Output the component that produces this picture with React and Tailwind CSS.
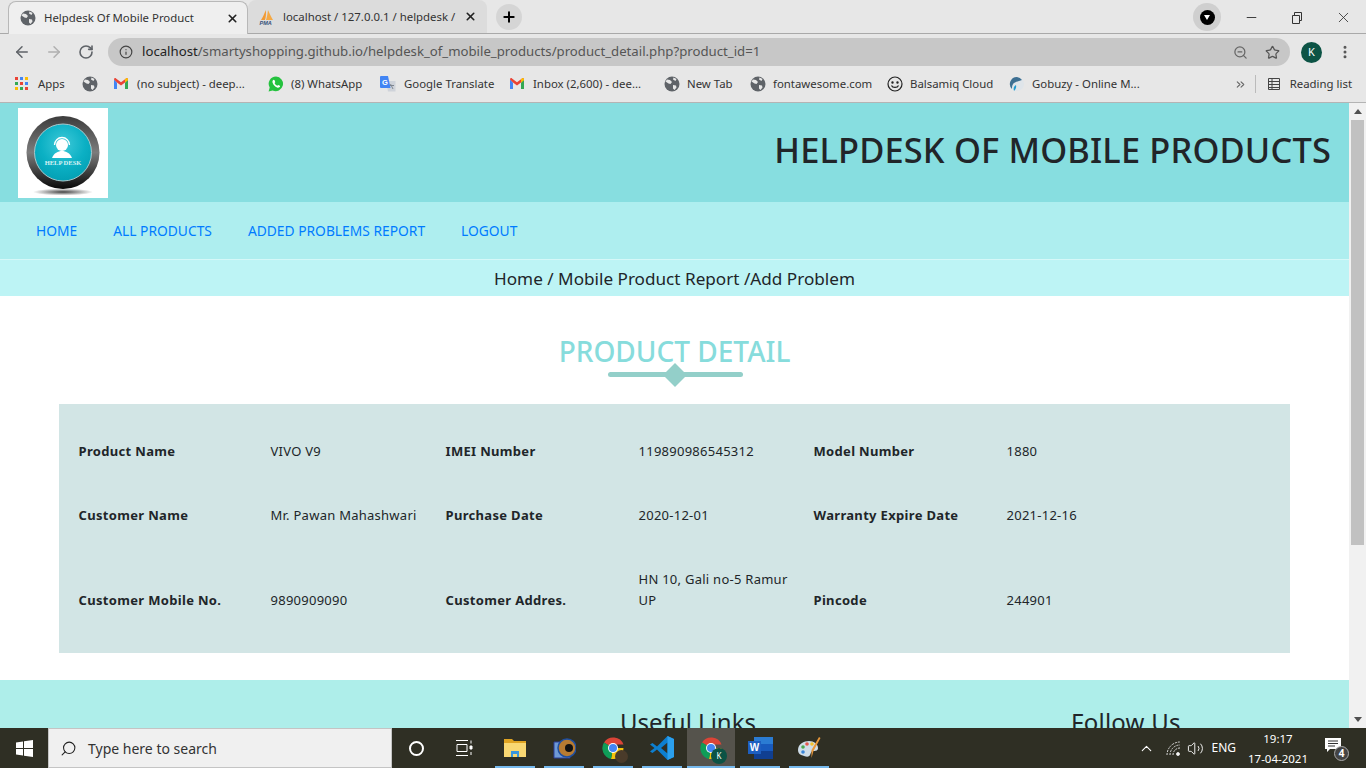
import { ArrowLeft, ArrowRight, RotateCw, Info, Star, ZoomOut, EllipsisVertical, X, Plus, Minus, ChevronsRight, ChevronUp, Search, Volume2 } from 'lucide-react'

function GlobeIcon({ size = 16 }) {
  return (
    <svg width={size} height={size} viewBox="0 0 16 16" className="shrink-0">
      <circle cx="8" cy="8" r="7.5" fill="#5f6368" />
      <path d="M3 3.500l3 .5 2 2-1.500 2-2-.5-3-2zM9 9l3 .5.5 2-2 2.500-1.500-1.500zM9.500 1.500l3 1.500-1 2-2.500-1.500z" fill="#e8e8e8" />
    </svg>
  )
}

function GmailIcon() {
  return (
    <svg width="14" height="11" viewBox="0 0 14 11" className="shrink-0">
      <path d="M0 1.500V11h3V4.500z" fill="#4285f4" />
      <path d="M14 1.500V11h-3V4.500z" fill="#34a853" />
      <path d="M0 1.500C0 .3 1.200-.3 2 .4L7 4.200 12 .4c.8-.7 2-.1 2 1.100L11 4.500 7 7.500 3 4.500z" fill="#ea4335" />
      <path d="M11 .9V4.500L14 2.300V1.500C14 .3 12.800-.3 12 .4z" fill="#fbbc04" />
    </svg>
  )
}

function WhatsappIcon() {
  return (
    <svg width="16" height="16" viewBox="0 0 16 16" className="shrink-0">
      <path d="M8 .5a7.300 7.300 0 0 0-6.300 11L.6 15.400l4-1A7.300 7.300 0 1 0 8 .5z" fill="#25c23f" />
      <path d="M5.500 3.800c-.9.600-1.300 1.700-.9 3 .6 2 2.400 4 4.500 4.800 1.300.5 2.500 0 3-1l-.2-.9-1.700-.8-.9.9c-1.200-.4-2.300-1.500-2.800-2.700l.8-.9-.7-1.900z" fill="#fff" />
    </svg>
  )
}

function TranslateIcon() {
  return (
    <svg width="16" height="16" viewBox="0 0 16 16" className="shrink-0">
      <path d="M6 5h9.500v10.500H8z" fill="#cfd3da" />
      <path d="M10.500 8l2.500 5M9 9.500h5" stroke="#7d8590" strokeWidth="1" fill="none" />
      <path d="M0 1a1 1 0 0 1 1-1h7l2.500 12H1a1 1 0 0 1-1-1z" fill="#4285f4" />
      <text x="2" y="8.500" fontSize="7.500" fontWeight="700" fill="#fff" fontFamily="Liberation Sans">G</text>
    </svg>
  )
}

function Smiley() {
  return (
    <svg width="16" height="16" viewBox="0 0 16 16" className="shrink-0" fill="none" stroke="#222" strokeWidth="1.200">
      <circle cx="8" cy="8" r="7" />
      <circle cx="5.500" cy="6.500" r=".6" fill="#222" />
      <circle cx="10.500" cy="6.500" r=".6" fill="#222" />
      <path d="M4.500 9.500c1 2.500 6 2.500 7 0" />
    </svg>
  )
}

function GobuzyIcon() {
  return (
    <svg width="16" height="16" viewBox="0 0 16 16" className="shrink-0">
      <circle cx="8" cy="8" r="7" fill="#dfe5ea" />
      <path d="M8 1a7 7 0 0 0-5 12c0-4 1-6 4-7 2-.8 4-1 6-2a7 7 0 0 0-5-3z" fill="#3d6f92" />
      <path d="M5 15c-1-3 0-5 2-6 .5 2 0 4-2 6z" fill="#1f9bd1" />
    </svg>
  )
}

function PmaIcon() {
  return (
    <svg width="16" height="16" viewBox="0 0 16 16" className="shrink-0">
      <path d="M2 11C4 8 5 5 7 1c0 4 0 7-1 10z" fill="#f29a33" />
      <path d="M7 11c1-3 1.500-6 2-10 1.500 3 3 7 5 10z" fill="#f5a945" />
      <text x="0.500" y="15.500" fontSize="5.500" fontWeight="700" fontStyle="italic" fill="#35507a" fontFamily="Liberation Sans">PMA</text>
    </svg>
  )
}

function AppsGrid() {
  const colors = ['#ea4335', '#4285f4', '#fbbc04', '#34a853', '#ea4335', '#4285f4', '#fbbc04', '#34a853', '#ea4335']
  return (
    <div className="grid grid-cols-3 gap-[2px] w-[13px] shrink-0">
      {colors.map((c, i) => <span key={i} className="w-[3px] h-[3px]" style={{ background: c }} />)}
    </div>
  )
}

function Bookmark({ icon, label, className = '' }) {
  return (
    <div className={`flex items-center shrink-0 ${className}`}>
      {icon}
      <span className="text-[11.400px] text-[#333] whitespace-nowrap">{label}</span>
    </div>
  )
}

function BrowserChrome() {
  return (
    <div className="h-[103px] shrink-0 bg-[#e7e7e7] border-b border-[#b4b4b4] font-['Noto_Sans',sans-serif]">
      {/* tabs */}
      <div className="h-[34px] flex items-end pl-[8px] border-b border-[#a9a9a9] relative">
        <div className="w-[240px] h-[33px] bg-[#efefef] rounded-t-lg border border-b-0 border-[#b8b8b8] flex items-center pl-[11px] pr-[8px] gap-[8px] relative z-10 -mb-px">
          <GlobeIcon />
          <span className="text-[11.400px] text-[#333] flex-1 whitespace-nowrap">Helpdesk Of Mobile Product</span>
          <X size={13} strokeWidth={3} className="text-[#222]" />
        </div>
        <div className="w-[239px] h-[33px] bg-[#dcdcdc] rounded-t-lg flex items-center pl-[11px] pr-[10px] gap-[8px]">
          <PmaIcon />
          <span className="text-[11.400px] text-[#333] flex-1 whitespace-nowrap">localhost / 127.0.0.1 / helpdesk /</span>
          <X size={13} strokeWidth={3} className="text-[#222]" />
        </div>
        <div className="w-[26px] h-[26px] rounded-full bg-[#d5d5d5] flex items-center justify-center ml-[9px] mb-[3px]">
          <Plus size={16} strokeWidth={3} className="text-black" />
        </div>
        <div className="flex-1" />
        <div className="w-[28px] h-[28px] rounded-full bg-[#cfcfcf] flex items-center justify-center mb-[2px] mr-[23px]">
          <span className="w-[15px] h-[15px] rounded-full bg-black flex items-center justify-center">
            <span className="w-0 h-0 border-x-[3.500px] border-x-transparent border-t-[5px] border-t-white" />
          </span>
        </div>
        <div className="flex items-center gap-[32px] pr-[14px] mb-[7px] text-[#333]">
          <Minus size={15} strokeWidth={1.500} />
          <svg width="12" height="12" viewBox="0 0 12 12" fill="none" stroke="#333"><path d="M1.500 3.500h7v8h-7zM3.500 3.500V.5h7v8h-2" /></svg>
          <X size={17} strokeWidth={1.200} />
        </div>
      </div>
      {/* toolbar */}
      <div className="h-[35px] flex items-center pl-[13px] pr-[13px] pt-[1px]">
        <ArrowLeft size={18} className="text-[#5f6368] mr-[14px]" />
        <ArrowRight size={18} className="text-[#b0b0b0] mr-[15px]" />
        <RotateCw size={16} strokeWidth={2.400} className="text-[#5f6368] mr-[14px]" />
        <div className="w-[1182px] h-[28px] rounded-full bg-[#c7c7c7] flex items-center pl-[11px] pr-[10px]">
          <Info size={14} strokeWidth={2} className="text-[#444] mr-[9px]" />
          <span className="text-[13.200px] text-[#555] flex-1 whitespace-nowrap"><span className="text-[#222]">localhost</span>/smartyshopping.github.io/helpdesk_of_mobile_products/product_detail.php?product_id=1</span>
          <ZoomOut size={15} className="text-[#666] mr-[17px]" />
          <Star size={15} strokeWidth={2} className="text-[#555]" />
        </div>
        <span className="w-[21px] h-[21px] rounded-full bg-[#0c5345] text-white text-[11px] flex items-center justify-center ml-[11px]">K</span>
        <EllipsisVertical size={16} strokeWidth={2.500} className="text-[#555] ml-[15px]" />
      </div>
      {/* bookmarks */}
      <div className="h-[33px] pb-[3px] flex items-center pl-[15px] pr-[14px]">
        <Bookmark icon={<AppsGrid />} label="Apps" className="w-[67px] gap-[10px]" />
        <div className="w-[32px] shrink-0"><GlobeIcon /></div>
        <Bookmark icon={<GmailIcon />} label="(no subject) - deep..." className="w-[154px] gap-[9px]" />
        <Bookmark icon={<WhatsappIcon />} label="(8) WhatsApp" className="w-[112px] gap-[7px]" />
        <Bookmark icon={<TranslateIcon />} label="Google Translate" className="w-[130px] gap-[8px]" />
        <Bookmark icon={<GmailIcon />} label="Inbox (2,600) - dee..." className="w-[154px] gap-[9px]" />
        <Bookmark icon={<GlobeIcon />} label="New Tab" className="w-[86px] gap-[7px]" />
        <Bookmark icon={<GlobeIcon />} label="fontawesome.com" className="w-[137px] gap-[7px]" />
        <Bookmark icon={<Smiley />} label="Balsamiq Cloud" className="w-[122px] gap-[7px]" />
        <Bookmark icon={<GobuzyIcon />} label="Gobuzy - Online M..." className="gap-[7px]" />
        <div className="flex-1" />
        <ChevronsRight size={13} className="text-[#666] mr-[8px]" />
        <span className="w-px h-[18px] bg-[#bbb] mr-[11px]" />
        <svg width="14" height="14" viewBox="0 0 14 14" fill="none" stroke="#444" className="mr-[9px]"><path d="M1.500 1.500h11v11h-11zM1.500 4.500h11M1.500 7.500h11M1.500 10.500h11M5 1.500v11" /></svg>
        <span className="text-[11.400px] text-[#333]">Reading list</span>
      </div>
    </div>
  )
}

function Logo() {
  return (
    <div className="w-[90px] h-[90px] bg-white shrink-0">
      <svg width="90" height="90" viewBox="0 0 90 90">
        <defs>
          <radialGradient id="ball" cx="50%" cy="35%" r="65%">
            <stop offset="0%" stopColor="#3fc9d8" />
            <stop offset="60%" stopColor="#0bb0c4" />
            <stop offset="100%" stopColor="#03a0b4" />
          </radialGradient>
          <linearGradient id="ring" x1="0" y1="0" x2="0" y2="1">
            <stop offset="0%" stopColor="#3c3c3c" />
            <stop offset="50%" stopColor="#7c7c7c" />
            <stop offset="100%" stopColor="#080808" />
          </linearGradient>
          <radialGradient id="shadow">
            <stop offset="0%" stopColor="#444" />
            <stop offset="100%" stopColor="#fff" />
          </radialGradient>
        </defs>
        <ellipse cx="45" cy="84" rx="30" ry="3.500" fill="url(#shadow)" />
        <circle cx="45" cy="44.500" r="36.500" fill="url(#ring)" />
        <circle cx="45" cy="44.500" r="28.500" fill="url(#ball)" stroke="#a8c8cc" strokeWidth="1" />
        <circle cx="44" cy="37" r="6" fill="#fff" />
        <path d="M36.500 37a7.500 7.500 0 0 1 15 0" fill="none" stroke="#fff" strokeWidth="1.300" />
        <path d="M34 50c2-5 6-7 10-7s8 2 10 7z" fill="#fff" />
        <text x="45" y="57" textAnchor="middle" fontSize="6.500" fontWeight="700" fontFamily="Liberation Serif" fill="#d8f2f4">HELP DESK</text>
      </svg>
    </div>
  )
}

const rows = [
  ['Product Name', 'VIVO V9', 'IMEI Number', '119890986545312', 'Model Number', '1880'],
  ['Customer Name', 'Mr. Pawan Mahashwari', 'Purchase Date', '2020-12-01', 'Warranty Expire Date', '2021-12-16'],
  ['Customer Mobile No.', '9890909090', 'Customer Addres.', 'HN 10, Gali no-5 Ramur UP', 'Pincode', '244901'],
]

function DetailTable() {
  return (
    <div className="mx-[59px] mt-[27px] w-[1231px] h-[249px] bg-[#d2e5e5] pl-[19.500px] pt-[15px] text-[13px] text-[#212529] tracking-[.02em]">
      {rows.map((r, i) => (
        <div key={i} className={`grid grid-cols-[192px_175px_193px_175px_193px_1fr] items-center ${i === 2 ? 'h-[106px]' : 'h-[64px]'}`}>
          {r.map((cell, j) => (
            <div key={j} className={`leading-[21px] ${j % 2 === 0 ? 'font-bold tracking-[.025em]' : 'pr-[15px]'} ${i === 2 && j === 3 ? 'mb-[21px]' : ''}`}>{cell}</div>
          ))}
        </div>
      ))}
    </div>
  )
}

function Page() {
  return (
    <div className="flex-1 min-w-0 flex flex-col overflow-hidden bg-white font-['Noto_Sans',sans-serif]">
      <header className="h-[99px] shrink-0 bg-[#87dee0] flex items-start justify-between pl-[18px] pr-[18px] pt-[5px]">
        <Logo />
        <h1 className="text-[34.400px] leading-[46px] font-medium text-[#212529] mt-[19px] tracking-[.005em]">HELPDESK OF MOBILE PRODUCTS</h1>
      </header>
      <nav className="h-[57px] shrink-0 bg-[#aeeeef] flex items-center pl-[36px] pt-[1px] gap-[36px] text-[13.800px] text-[#007bff]">
        <span>HOME</span>
        <span>ALL PRODUCTS</span>
        <span>ADDED PROBLEMS REPORT</span>
        <span>LOGOUT</span>
      </nav>
      <div className="h-[37px] shrink-0 bg-[#bdf4f5] border-t border-[#d6f8f8] pt-[1px] flex items-center justify-center text-[17.150px] text-[#212529]">
        Home / Mobile Product Report /Add Problem
      </div>
      <main className="h-[384px] shrink-0">
        <div className="pt-[36px] flex flex-col items-center">
          <h2 className="text-[28px] leading-[38px] font-medium text-[#87dcdc]">PRODUCT DETAIL</h2>
          <div className="relative w-[135px] h-[5px] rounded-full bg-[#93cfc9] mt-[2px] ml-[1px]">
            <span className="absolute left-1/2 top-1/2 -translate-x-1/2 -translate-y-1/2 w-[17px] h-[17px] rotate-45 bg-[#93cfc9]" />
          </div>
        </div>
        <DetailTable />
      </main>
      <footer className="flex-1 bg-[#aeeeea] relative overflow-hidden text-[24px] text-[#212529]">
        <h3 className="absolute left-[620px] top-[26px] leading-[32px]">Useful Links</h3>
        <h3 className="absolute left-[1071px] top-[26px] leading-[32px] tracking-[.01em]">Follow Us</h3>
      </footer>
    </div>
  )
}

function Scrollbar() {
  return (
    <div className="w-[17px] shrink-0 bg-[#f1f1f1] flex flex-col items-center">
      <span className="mt-[6px] w-0 h-0 border-x-[4px] border-x-transparent border-b-[5px] border-b-[#505050]" />
      <div className="w-[13px] h-[425px] bg-[#c1c1c1] mt-[6px]" />
      <div className="flex-1" />
      <span className="mb-[6px] w-0 h-0 border-x-[4px] border-x-transparent border-t-[5px] border-t-[#505050]" />
    </div>
  )
}

function ChromeLogo({ size = 24, badge }) {
  return (
    <div className="relative" style={{ width: size, height: size }}>
      <svg width={size} height={size} viewBox="0 0 24 24">
        <path d="M12 12L3 6.500A11 11 0 0 1 22.500 8.500H12z" fill="#db4437" />
        <path d="M12 12h10.500A11 11 0 0 1 10 23z" fill="#f4c20d" />
        <path d="M12 12L10 23A11 11 0 0 1 3 6.500z" fill="#0f9d58" />
        <circle cx="12" cy="12" r="5" fill="#fff" />
        <circle cx="12" cy="12" r="4" fill="#4285f4" />
      </svg>
      {badge}
    </div>
  )
}

function TaskIcon({ children, active }) {
  return (
    <div className={`w-[48px] h-[40px] flex items-center justify-center relative ${active ? 'bg-[#55534c]' : ''}`}>
      {children}
      <span className={`absolute bottom-0 h-[2px] bg-[#76b9ed] ${active ? 'inset-x-0' : 'inset-x-[4px]'}`} />
    </div>
  )
}

function Taskbar() {
  return (
    <div className="h-[40px] shrink-0 bg-[#2f2f24] flex items-center text-white font-['Noto_Sans',sans-serif]">
      <div className="w-[48px] flex justify-center">
        <svg width="17" height="17" viewBox="0 0 17 17" fill="#fff"><path d="M0 2.500l7-1v6.500H0zM8 1.300L17 0v8H8zM0 9h7v6.500l-7-1zM8 9h9v8l-9-1.300z" /></svg>
      </div>
      <div className="w-[344px] h-[40px] bg-[#f0f0f0] border border-[#c4c4c4] flex items-center pl-[11px] gap-[11px]">
        <Search size={17} strokeWidth={1.500} className="text-[#222] -scale-x-100" />
        <span className="text-[14px] text-[#333]">Type here to search</span>
      </div>
      <div className="w-[48px] flex justify-center">
        <span className="w-[15px] h-[15px] rounded-full border-2 border-white" />
      </div>
      <div className="w-[48px] flex justify-center mr-[3px]">
        <svg width="18" height="16" viewBox="0 0 18 16" fill="none" stroke="#fff"><path d="M1 .5h12M1 15.500h12M2 4.500h10v7H2zM16 .5v3M16 12v3" /><path d="M15 6h2v3h-2z" fill="#fff" /></svg>
      </div>
      <div className="flex gap-[1px]">
        <TaskIcon>
          <svg width="22" height="18" viewBox="0 0 22 18"><path d="M0 0h8l2 2h12v3H0z" fill="#e0a422" /><path d="M0 4h22v14H0z" fill="#f9d873" /><path d="M7 12h8v6h-2v-3H9v3H7z" fill="#3a96dd" /></svg>
        </TaskIcon>
        <TaskIcon>
          <svg width="23" height="24" viewBox="0 0 23 24"><path d="M1 6h16v16H1z" fill="#6f9ad6" stroke="#2b3f9a" /><circle cx="14" cy="12" r="9" fill="#b77b32" stroke="#1f4fa0" strokeWidth="1.500" /><circle cx="16" cy="12" r="4" fill="#111" /></svg>
        </TaskIcon>
        <TaskIcon>
          <ChromeLogo badge={<span className="absolute -right-[3px] -bottom-[3px] w-[13px] h-[13px] rounded-full bg-[#4a3b2a]" />} />
        </TaskIcon>
        <TaskIcon>
          <svg width="24" height="24" viewBox="0 0 24 24"><path d="M17.500 0L24 3v18l-6.500 3L7 13.500 2.500 17 0 15.500 4.500 12 0 8.500 2.500 7 7 10.500z" fill="#0d7fd0" /><path d="M17.500 6.500L11 12l6.500 5.500z" fill="#2f2f24" /><path d="M17.500 0L24 3v18l-6.500 3z" fill="#2ba0ee" /></svg>
        </TaskIcon>
        <TaskIcon active>
          <ChromeLogo badge={<span className="absolute -right-[4px] -bottom-[4px] w-[16px] h-[16px] rounded-full bg-[#0c5345] text-[8px] flex items-center justify-center">K</span>} />
        </TaskIcon>
        <TaskIcon>
          <svg width="25" height="22" viewBox="0 0 25 22"><path d="M6 0h19v22H6z" fill="#2b7cd3" /><path d="M6 7h19v7H6z" fill="#185abd" /><path d="M6 14h19v8H6z" fill="#103f91" /><path d="M0 4h13v13H0z" fill="#1e5fc0" /><text x="6.500" y="14" textAnchor="middle" fontSize="10" fontWeight="700" fill="#fff" fontFamily="Liberation Sans">W</text></svg>
        </TaskIcon>
        <TaskIcon>
          <svg width="24" height="24" viewBox="0 0 24 24"><path d="M1 14c0-6 6-9 11-9s9 3 9 7c0 3-3 3-5 3s-2 2-3 4-3 2-6 1-6-2-6-6z" fill="#cfdde8" /><circle cx="6" cy="11" r="1.800" fill="#4aa84f" /><circle cx="10" cy="8" r="1.800" fill="#e2574c" /><circle cx="15" cy="8" r="1.800" fill="#f2c12e" /><circle cx="6" cy="16" r="1.800" fill="#3a86d8" /><path d="M22 1l1.500 1-7 13-2 7 0-8z" fill="#e8973a" /></svg>
        </TaskIcon>
      </div>
      <div className="flex-1" />
      <ChevronUp size={17} strokeWidth={1.500} className="mr-[11px]" />
      <svg width="15" height="15" viewBox="0 0 15 15" fill="none" stroke="#ddd" className="mr-[6px]"><path d="M1 14a13 13 0 0 1 13-13M4 14a10 10 0 0 1 10-10M7 14a7 7 0 0 1 7-7" strokeDasharray="2 1" /><circle cx="12" cy="13" r="1.500" fill="#fff" /></svg>
      <Volume2 size={17} strokeWidth={1.300} className="mr-[7px]" />
      <span className="text-[12px] mr-[11px] whitespace-nowrap">ENG</span>
      <div className="text-[11.500px] leading-[20px] text-center w-[62px] mr-[16px] pt-[1px] whitespace-nowrap">
        <div>19:17</div>
        <div>17-04-2021</div>
      </div>
      <div className="relative mr-[17px] w-[24px] h-[22px]">
        <svg width="16" height="15" viewBox="0 0 16 15" className="mt-[1px]"><path d="M0 0h16v11H5l-3 3v-3H0z" fill="#fff" /><path d="M3 3h10M3 5.500h10M3 8h7" stroke="#333" /></svg>
        <span className="absolute right-0 -bottom-[2px] w-[15px] h-[15px] rounded-full bg-[#444] border border-[#aaa] text-[10px] font-bold flex items-center justify-center">4</span>
      </div>
    </div>
  )
}

export default function App() {
  return (
    <div className="w-[1366px] h-[768px] flex flex-col overflow-hidden">
      <BrowserChrome />
      <div className="flex-1 min-h-0 flex">
        <Page />
        <Scrollbar />
      </div>
      <Taskbar />
    </div>
  )
}
